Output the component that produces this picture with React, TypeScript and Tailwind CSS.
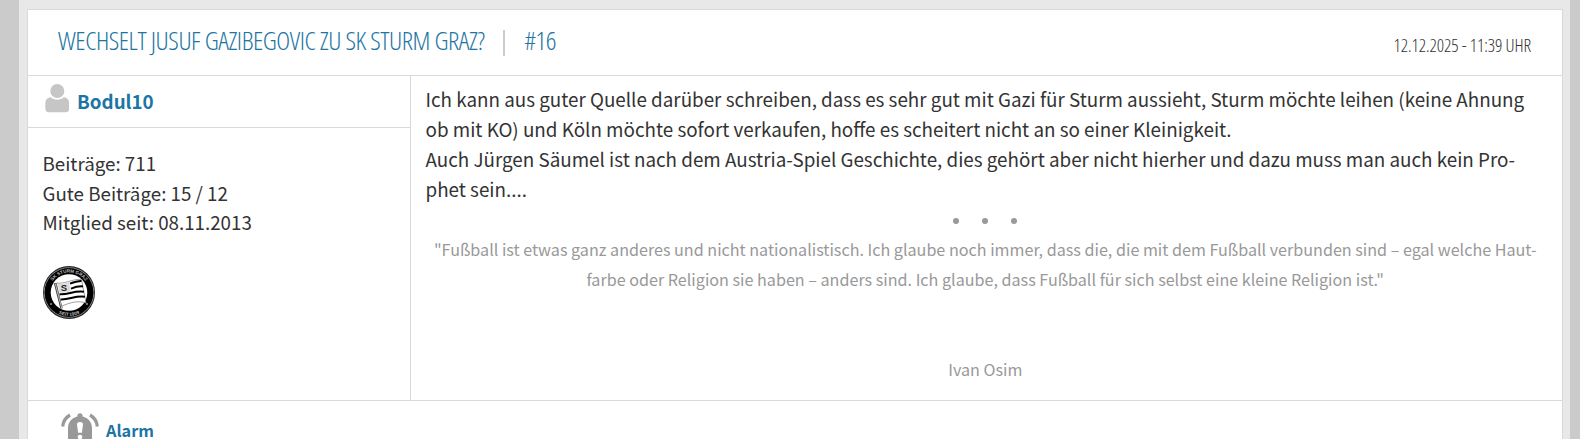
type Stat = {
  label: string;
  value: string;
};

const stats: Stat[] = [
  { label: 'Beiträge', value: '711' },
  { label: 'Gute Beiträge', value: '15 / 12' },
  { label: 'Mitglied seit', value: '08.11.2013' },
];

function UserIcon() {
  return (
    <svg width="24" height="29" viewBox="-0.300 0 24 29" className="shrink-0" fill="#c6c6c6">
      <circle cx="12" cy="7" r="7" />
      <path d="M5.5 13.2C1.6 13.4 0 16.4 0 20v4.6C0 27 1.300 28.300 3.600 28.300h16.800c2.300 0 3.600-1.300 3.600-3.700V20c0-3.600-1.600-6.600-5.500-6.800-1.700 1.600-4 2.500-6.500 2.500s-4.800-.9-6.500-2.500z" />
    </svg>
  );
}

function AlarmIcon() {
  return (
    <svg width="38" height="26" viewBox="0 0 38 26" className="shrink-0">
      <path
        d="M16.300 3.400C16.300 1.500 17.400.3 19 .3s2.700 1.200 2.700 3.100c5.500 1.300 9.300 5.600 9.300 11.600V26H7V15C7 9 10.800 4.700 16.300 3.400z"
        fill="#999"
      />
      <path d="M16 11.500c0-1.700 1.200-2.500 3-2.500s3 .8 3 2.500l-1.100 8.300h-3.800z" fill="#fff" />
      <circle cx="19" cy="24" r="2.300" fill="#fff" />
      <path
        d="M1.700 13.500C2.100 8.500 4.600 4.600 9 2M36.300 13.500C35.900 8.500 33.400 4.600 29 2"
        fill="none"
        stroke="#999"
        strokeWidth="3.200"
      />
    </svg>
  );
}

function ClubCrest() {
  return (
    <svg width="52" height="53" viewBox="0 0 52 53">
      <defs>
        <path id="crestTop" d="M6 26.500a20 20 0 0 1 40 0" />
        <path id="crestBottom" d="M2.500 26.500a23.500 23.500 0 0 0 47 0" />
      </defs>
      <ellipse cx="26" cy="26.500" rx="26" ry="26.500" fill="#222" />
      <circle cx="26" cy="26.500" r="24.800" fill="none" stroke="#aaa" strokeWidth=".7" />
      <circle cx="26" cy="26.500" r="24.200" fill="#000" />
      <circle cx="26" cy="26.500" r="18.300" fill="#fff" />
      <g fill="#bbb" fontFamily="Liberation Sans, sans-serif" fontSize="4.600" fontWeight="700">
        <text textAnchor="middle">
          <textPath href="#crestTop" startOffset="50%">SK STURM GRAZ</textPath>
        </text>
        <text textAnchor="middle">
          <textPath href="#crestBottom" startOffset="50%">SEIT 1909</textPath>
        </text>
      </g>
      <circle cx="8" cy="38" r=".8" fill="#fff" />
      <circle cx="44" cy="38" r=".8" fill="#fff" />
      {/* flag */}
      <path
        d="M13.500 17c8 1.500 16-4.500 25-3.500L43 37c-8-2.500-15-1-25 3.500z"
        fill="#fff"
        stroke="#777"
        strokeWidth=".7"
      />
      <g fill="none" stroke="#000" strokeWidth="2">
        <path d="M27 17.600c4-1.600 7-2.800 11.500-2.600" />
        <path d="M28 22.600c4-1.600 7-2.600 12-2.200" />
        <path d="M16.500 28.200c8.500.8 14.500-4 24.500-2.500" />
        <path d="M17.500 33.400c8.500.6 14.500-4 24.500-2.600" />
      </g>
      <path d="M14.500 17.800c4 .6 8-.4 11.500-1.800l2 9c-4 1.400-7 2.100-11.500 1.800z" fill="#ddd" />
      <text x="17.800" y="25" fontSize="9.500" fontWeight="700" fontFamily="Liberation Sans, sans-serif" fill="#222">
        S
      </text>
      <path d="M12 17 18.500 42.500" stroke="#444" strokeWidth="2.400" />
      <path d="M12.300 17.500 18.700 42" stroke="#ccc" strokeWidth=".9" />
    </svg>
  );
}

export default function App() {
  return (
    <div className="h-[439px] w-[1580px] overflow-hidden bg-[#cbcbcb] pl-[19px] pr-[10px] font-['Noto_Sans_CJK_SC',sans-serif] text-[#333]">
      <div className="h-full bg-[#e8e8e8] pt-[9px] pr-[7px] pl-2">
        <article className="h-[430px] border border-b-0 border-[#d9d9d9] bg-white">
          <header className="flex h-[66px] justify-between border-b border-[#d9d9d9] pr-[31px] pl-[30px] font-['Open_Sans',sans-serif] font-light uppercase [font-stretch:75%]">
            <h1 className="flex text-[26.400px] leading-[61px] tracking-[-0.460px] whitespace-nowrap text-[#1d75a3]">
              <span>Wechselt Jusuf Gazibegovic zu SK Sturm Graz?</span>
              <span className="mt-5 ml-[19px] h-[26px] w-[2px] bg-[#ccc]" />
              <span className="ml-[19px]">#16</span>
            </h1>
            <time className="text-[18px] leading-[71px] tracking-[-0.080px] whitespace-nowrap">12.12.2025 - 11:39 Uhr</time>
          </header>

          <div className="flex h-[325px] border-b border-[#d9d9d9]">
            <aside className="w-[383px] shrink-0 border-r border-[#d9d9d9]">
              <div className="flex h-[52px] border-b border-[#d9d9d9] pt-2 pl-[17px]">
                <UserIcon />
                <a className="ml-2 text-[18.800px] leading-[34px] font-bold text-[#1d75a3]">Bodul10</a>
              </div>
              <ul className="pt-5 pl-[14.500px] text-[18.750px] leading-[29.500px]">
                {stats.map((s) => (
                  <li key={s.label}>
                    {s.label}: {s.value}
                  </li>
                ))}
              </ul>
              <div className="pt-[29px] pl-[15px]">
                <ClubCrest />
              </div>
            </aside>

            <section className="flex-1 pt-2 pr-[17px] pl-[14.500px] leading-[30px] whitespace-nowrap">
              <p className="text-[18.820px]">
                Ich kann aus guter Quelle darüber schreiben, dass es sehr gut mit Gazi für Sturm aussieht, Sturm möchte leihen (keine Ahnung
                <br />
                ob mit KO) und Köln möchte sofort verkaufen, hoffe es scheitert nicht an so einer Kleinigkeit.
                <br />
                Auch Jürgen Säumel ist nach dem Austria-Spiel Geschichte, dies gehört aber nicht hierher und dazu muss man auch kein Pro-
                <br />
                phet sein....
              </p>
              <div className="flex h-[30px] items-center justify-center gap-[23px] pt-[3px]">
                <span className="size-1.5 rounded-full bg-[#999]" />
                <span className="size-1.5 rounded-full bg-[#999]" />
                <span className="size-1.5 rounded-full bg-[#999]" />
              </div>
              <div className="text-center text-[16.140px] text-[#999]">
                <p>
                  "Fußball ist etwas ganz anderes und nicht nationalistisch. Ich glaube noch immer, dass die, die mit dem Fußball verbunden sind – egal welche Haut-
                  <br />
                  farbe oder Religion sie haben – anders sind. Ich glaube, dass Fußball für sich selbst eine kleine Religion ist."
                </p>
                <p className="mt-[60px]">Ivan Osim</p>
              </div>
            </section>
          </div>

          <footer className="flex pt-3 pl-[33px]">
            <AlarmIcon />
            <a className="ml-[7px] text-[16.300px] leading-[34px] font-bold text-[#1d75a3]">Alarm</a>
          </footer>
        </article>
      </div>
    </div>
  );
}
